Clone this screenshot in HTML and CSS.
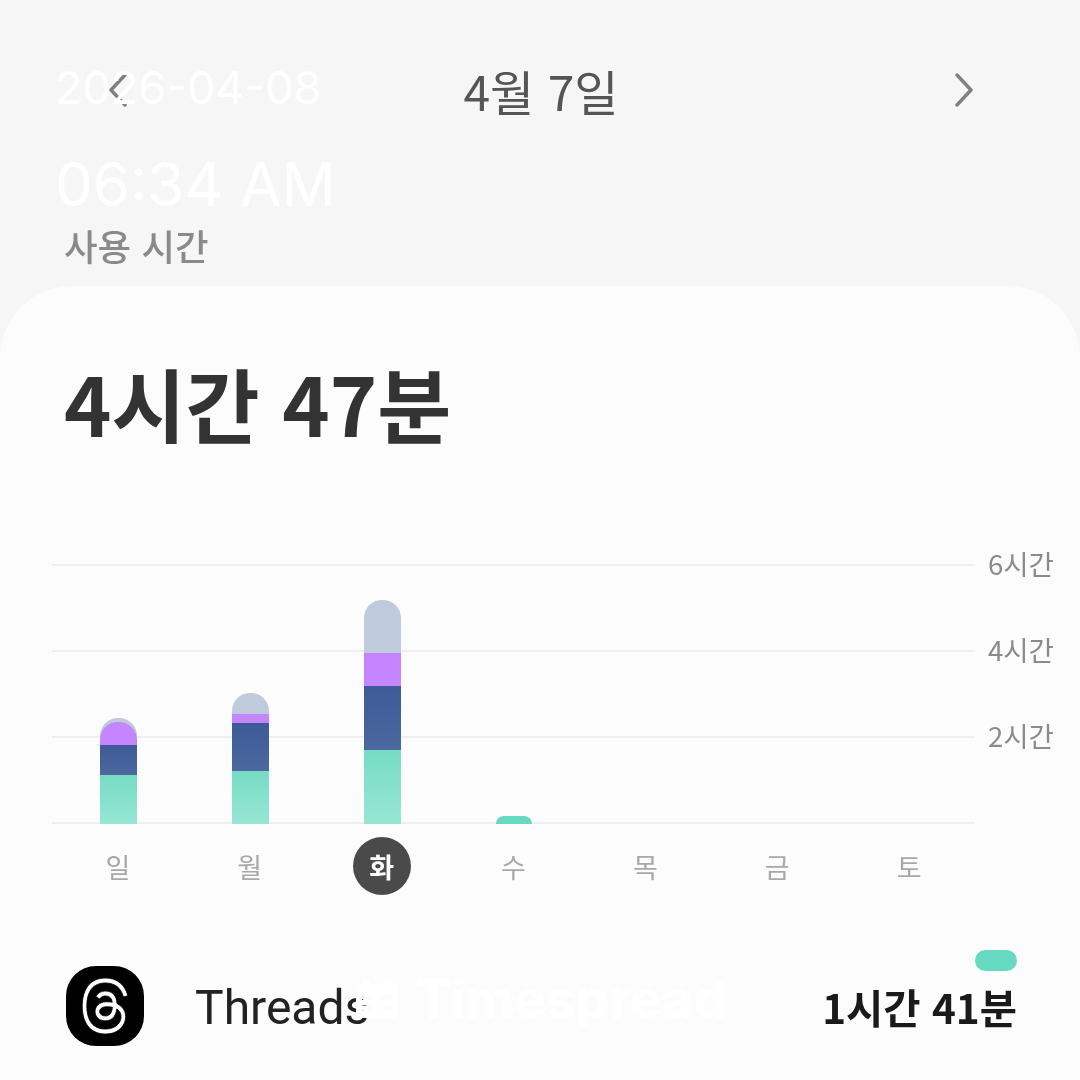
FILE: index.html
```html
<!DOCTYPE html>
<html lang="ko">
<head>
<meta charset="utf-8">
<title>사용 시간</title>
<link rel="stylesheet" href="styles.css">
</head>
<body>
<main class="screen">
  <header class="top">
    <nav class="date-nav">
      <svg class="chevron" viewBox="0 0 20 34"><path d="M17 2 3 17l14 15"/></svg>
      <h1 class="date-title">4월 7일</h1>
      <svg class="chevron" viewBox="0 0 20 34"><path d="M3 2l14 15L3 32"/></svg>
    </nav>
    <p class="usage-label">사용 시간</p>
  </header>
  <section class="card">
    <h2 class="total">4시간 47분</h2>
    <div class="chart">
      <div class="plot">
        <div class="grid-lines">
          <div class="grid-row"><span class="grid-line"></span><span class="grid-label">6시간</span></div>
          <div class="grid-row"><span class="grid-line"></span><span class="grid-label">4시간</span></div>
          <div class="grid-row"><span class="grid-line"></span><span class="grid-label">2시간</span></div>
          <div class="grid-row"><span class="grid-line"></span></div>
        </div>
        <div class="bars">
          <div class="col"><div class="bar">
            <i class="seg gray" style="height:22px"></i><i class="seg purple capped" style="height:23px"></i><i class="seg navy" style="height:30px"></i><i class="seg teal" style="height:49px"></i>
          </div></div>
          <div class="col"><div class="bar">
            <i class="seg gray" style="height:21px"></i><i class="seg purple" style="height:9px"></i><i class="seg navy" style="height:48px"></i><i class="seg teal" style="height:53px"></i>
          </div></div>
          <div class="col"><div class="bar">
            <i class="seg gray" style="height:53px"></i><i class="seg purple" style="height:33px"></i><i class="seg navy" style="height:64px"></i><i class="seg teal" style="height:74px"></i>
          </div></div>
          <div class="col"><div class="bar bar-small">
            <i class="seg solid" style="height:8px"></i>
          </div></div>
          <div class="col"></div>
          <div class="col"></div>
          <div class="col"></div>
        </div>
      </div>
      <div class="days">
        <span class="day">일</span>
        <span class="day">월</span>
        <span class="day"><b class="today">화</b></span>
        <span class="day">수</span>
        <span class="day">목</span>
        <span class="day">금</span>
        <span class="day">토</span>
      </div>
    </div>
    <div class="app-row">
      <div class="app-icon">
        <svg viewBox="0 0 24 24" preserveAspectRatio="none"><path d="M12.186 24h-.007c-3.581-.024-6.334-1.205-8.184-3.509C2.35 18.44 1.5 15.586 1.472 12.01v-.017c.03-3.579.879-6.43 2.525-8.482C5.845 1.205 8.6.024 12.18 0h.014c2.746.02 5.043.725 6.826 2.098 1.677 1.29 2.858 3.13 3.509 5.467l-2.04.569c-1.104-3.96-3.898-5.984-8.304-6.015-2.91.022-5.11.936-6.54 2.717C4.307 6.504 3.616 8.914 3.589 12c.027 3.086.718 5.496 2.057 7.164 1.43 1.783 3.631 2.698 6.54 2.717 2.623-.02 4.358-.631 5.8-2.045 1.647-1.613 1.618-3.593 1.09-4.798-.31-.71-.873-1.3-1.634-1.75-.192 1.352-.622 2.446-1.284 3.272-.886 1.102-2.14 1.704-3.73 1.79-1.202.065-2.361-.218-3.259-.801-1.063-.689-1.685-1.74-1.752-2.964-.065-1.19.408-2.285 1.33-3.082.88-.76 2.119-1.207 3.583-1.291a13.853 13.853 0 0 1 3.02.142c-.126-.742-.375-1.332-.75-1.757-.513-.586-1.308-.883-2.359-.89h-.029c-.844 0-1.992.232-2.721 1.32L7.734 7.847c.98-1.454 2.568-2.256 4.478-2.256h.044c3.194.02 5.097 1.975 5.287 5.388.108.046.216.094.321.142 1.49.7 2.58 1.761 3.154 3.07.797 1.82.871 4.79-1.548 7.158-1.85 1.81-4.094 2.628-7.277 2.65Zm1.003-11.69c-.242 0-.487.007-.739.021-1.836.103-2.98.946-2.916 2.143.067 1.256 1.452 1.839 2.784 1.767 1.224-.065 2.818-.543 3.086-3.71a10.5 10.5 0 0 0-2.215-.221z"/></svg>
      </div>
      <span class="app-name">Threads</span>
      <div class="app-usage">
        <span class="pill"></span>
        <span class="app-time">1시간 41분</span>
      </div>
    </div>
  </section>

  <div class="stamp">
    <div class="stamp-date">2026-04-08</div>
    <div class="stamp-time">06:34 AM</div>
  </div>
  <div class="brand">
    <svg class="brand-icon" viewBox="0 0 42 42" preserveAspectRatio="none"><path d="M6 0h8v5h14V0h8v5h2a4 4 0 0 1 4 4v29a4 4 0 0 1-4 4H4a4 4 0 0 1-4-4V9a4 4 0 0 1 4-4h2zM6 16v6h12v-6zm18 0v6h12v-6zM6 28v6h12v-6zm18 0v6h12v-6z"/></svg>
    <span class="brand-name">Timespread</span>
  </div>
</main>
</body>
</html>
```
FILE: styles.css
```css
* { box-sizing: border-box; }
html, body { margin: 0; padding: 0; }
body {
  width: 1080px;
  height: 1080px;
  overflow: hidden;
  background: #f6f6f6;
  font-family: "Noto Sans CJK KR", "Noto Sans", sans-serif;
}
.screen {
  position: relative;
  width: 1080px;
  height: 1080px;
  display: flex;
  flex-direction: column;
  overflow: hidden;
}
.top { height: 286px; padding-top: 58px; }
.date-nav {
  height: 62px;
  padding: 2px 106px 0 108px;
  display: flex;
  align-items: center;
  justify-content: space-between;
  filter: blur(0.5px);
}
.chevron {
  width: 20px;
  height: 34px;
  fill: none;
  stroke: #808080;
  stroke-width: 3.4;
  stroke-linecap: round;
  stroke-linejoin: round;
}
.date-title {
  margin: 0;
  font-size: 48px;
  font-weight: 400;
  line-height: 62px;
  color: #555;
}
.usage-label {
  margin: 101px 0 0 64px;
  font-size: 36.5px;
  line-height: 50px;
  font-weight: 500;
  color: #8a8a8a;
  filter: blur(0.5px);
}
.card {
  flex: 1;
  background: #fcfcfc;
  border-radius: 72px 72px 0 0;
  padding-top: 66px;
  display: flex;
  flex-direction: column;
}
.total {
  margin: 0 0 0 64px;
  font-size: 80.5px;
  line-height: 100px;
  font-weight: 700;
  color: #333;
  filter: blur(0.5px);
}
.chart { margin-top: 112px; padding-left: 52px; filter: blur(0.5px); }
.plot { display: grid; height: 260px; }
.grid-lines, .bars { grid-area: 1 / 1; }
.grid-lines {
  display: flex;
  flex-direction: column;
  justify-content: space-between;
}
.grid-row { height: 2px; display: flex; align-items: center; }
.grid-line { width: 923px; height: 2px; background: #efefef; flex: none; }
.grid-label {
  margin: 0 0 4px 13px;
  font-size: 27.5px;
  line-height: 40px;
  color: #8b8b8b;
  white-space: nowrap;
}
.bars { width: 923px; padding-left: 1px; display: flex; align-items: flex-end; }
.col { flex: 1; display: flex; justify-content: center; }
.bar {
  width: 37px;
  display: flex;
  flex-direction: column;
  overflow: hidden;
  border-radius: 18px 18px 0 0;
}
.bar-small { width: 36px; border-radius: 8px 8px 0 0; }
.seg { display: block; flex: none; }
.gray { background: #bfcadb; }
.purple { background: #c585ff; }
.capped { position: relative; margin-top: -18px; border-radius: 18px 18px 0 0; }
.navy { background: linear-gradient(#3e5a98, #4c689f); }
.teal { background: linear-gradient(#77dcc4, #97e6d4); }
.solid { background: #66d9c1; }
.days { width: 923px; margin-top: 13px; display: flex; }
.day {
  flex: 1;
  height: 58px;
  display: flex;
  align-items: center;
  justify-content: center;
  font-size: 27px;
  color: #a8a8a8;
}
.today {
  width: 58px;
  height: 58px;
  border-radius: 50%;
  background: #4a4a4a;
  color: #fff;
  font-weight: 700;
  display: flex;
  align-items: center;
  justify-content: center;
}
.app-row {
  margin-top: 71px;
  padding: 0 63px 0 66px;
  display: flex;
  align-items: center;
}
.app-icon {
  width: 78px;
  height: 80px;
  border-radius: 30px;
  background: #000;
  display: flex;
  align-items: center;
  justify-content: center;
  flex: none;
}
.app-icon svg { width: 52px; height: 56px; fill: #fff; stroke: #000; stroke-width: 0.35; }
.app-name {
  margin-left: 51px;
  padding-top: 4px;
  font-family: "Roboto", sans-serif;
  font-size: 48px;
  line-height: 60px;
  color: #222;
  filter: blur(0.4px);
}
.app-usage {
  margin-left: auto;
  display: flex;
  flex-direction: column;
  align-items: flex-end;
  filter: blur(0.4px);
}
.pill {
  width: 42px;
  height: 21px;
  border-radius: 11px;
  background: #66d9c1;
  margin-top: -28px;
  margin-bottom: 8px;
}
.app-time {
  font-size: 40.5px;
  line-height: 56px;
  font-weight: 700;
  color: #1a1a1a;
}
.stamp {
  position: absolute;
  left: 55px;
  top: 58px;
  color: #fff;
  font-family: "Inter", sans-serif;
}
.stamp-date { font-size: 45px; line-height: 60px; }
.stamp-time { font-size: 60px; line-height: 76px; margin-top: 28px; }
.brand {
  position: absolute;
  left: 356px;
  top: 969px;
  display: flex;
  align-items: center;
  gap: 17px;
  color: #fff;
}
.brand-icon { width: 42px; height: 38px; fill: #fff; }
.brand-name {
  font-family: "Inter", sans-serif;
  font-weight: 700;
  font-size: 53.5px;
  line-height: 60px;
}
```
